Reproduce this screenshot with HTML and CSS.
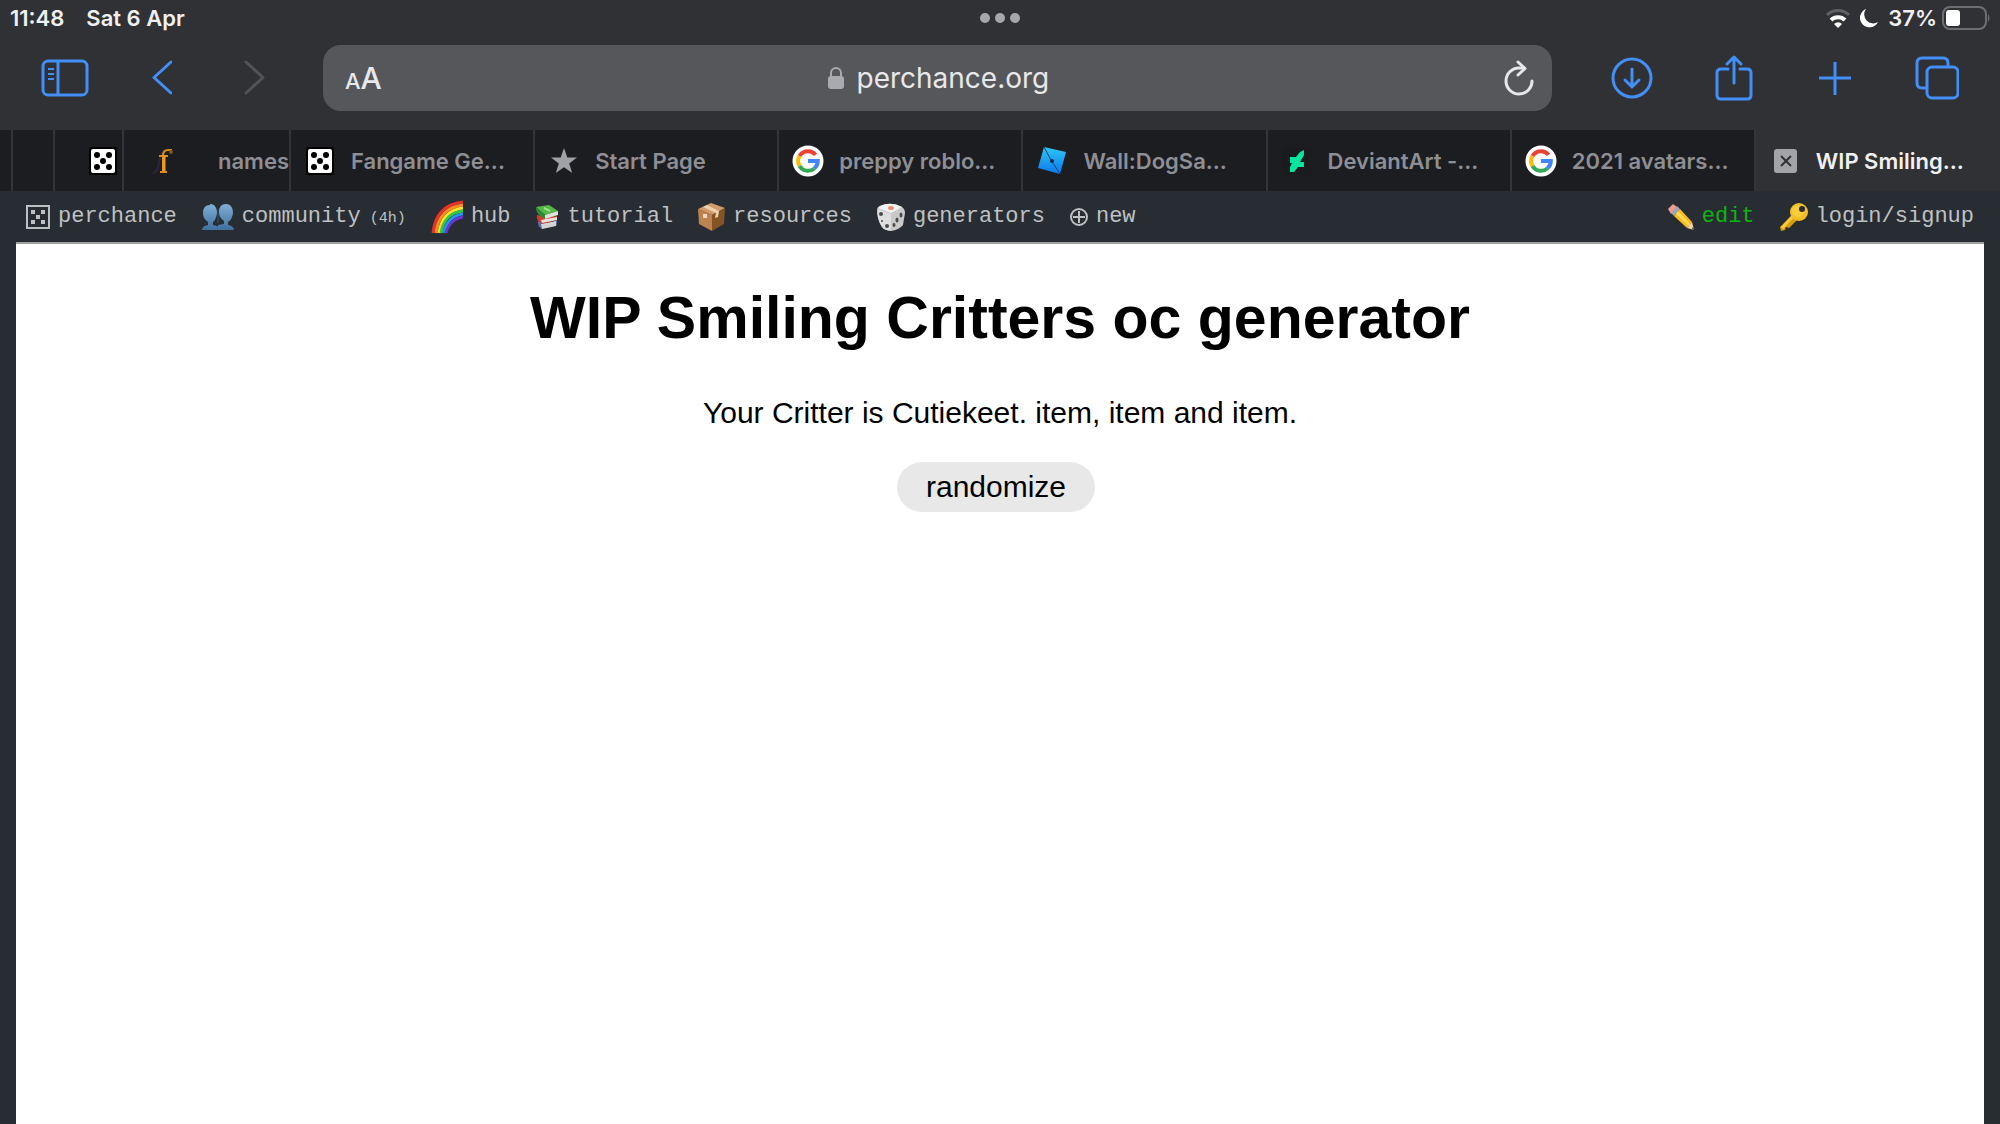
FILE: index.html
```html
<!DOCTYPE html>
<html lang="en">
<head>
    <meta charset="UTF-8">
    <meta name="viewport" content="width=device-width, initial-scale=1.0">
    <title>WIP Smiling Critters oc generator</title>
    <link rel="stylesheet" href="styles.css">
</head>
<body>
    <!-- shared symbols -->
    <svg class="symbols" aria-hidden="true">
        <symbol id="dice" viewBox="0 0 28 28">
            <rect width="28" height="28" rx="2" fill="#000"/>
            <rect x="2" y="2" width="24" height="24" rx="2" fill="#fff"/>
            <g fill="#000">
                <circle cx="8" cy="8" r="3"/><circle cx="20" cy="8" r="3"/>
                <circle cx="14" cy="14" r="3"/>
                <circle cx="8" cy="20" r="3"/><circle cx="20" cy="20" r="3"/>
            </g>
        </symbol>
        <symbol id="google" viewBox="0 0 32 32">
            <circle cx="16" cy="16" r="15.500" fill="#fff"/>
            <g fill="none" stroke-width="4">
                <path d="M23.600 9.800A9.800 9.800 0 0 0 7.500 11.100" stroke="#ea4335"/>
                <path d="M7.500 11.100a9.800 9.800 0 0 0 0 9.800" stroke="#fbbc05"/>
                <path d="M7.500 20.900a9.800 9.800 0 0 0 14.800 2.600" stroke="#34a853"/>
                <path d="M22.300 23.500A9.800 9.800 0 0 0 25.800 16H16" stroke="#4285f4"/>
            </g>
        </symbol>
    </svg>

    <header class="browser">
        <div class="status">
            <div class="status-left"><span>11:48</span><span>Sat 6 Apr</span></div>
            <svg class="dots" width="40" height="10" viewBox="0 0 40 10" fill="#a6a7aa">
                <circle cx="5" cy="5" r="5"/><circle cx="20" cy="5" r="5"/><circle cx="35" cy="5" r="5"/>
            </svg>
            <div class="status-right">
                <svg width="24" height="20" viewBox="0 0 24 20" fill="none" stroke-width="3">
                    <path d="M1 7a15.500 15.500 0 0 1 22 0" stroke="#606165"/>
                    <path d="M5 12a10 10 0 0 1 14 0" stroke="#fff" stroke-width="4"/>
                    <path d="M12 20l-4-4a5.600 5.600 0 0 1 8 0z" fill="#fff" stroke="none"/>
                </svg>
                <svg width="18" height="20" viewBox="0 0 18 20">
                    <path d="M6 1A9.500 9.500 0 1 0 18 14A9 9 0 0 1 6 1z" fill="#fff"/>
                </svg>
                <span class="battery">
                    37%
                    <svg width="48" height="24" viewBox="0 0 48 24">
                        <rect x="1" y="1" width="43" height="22" rx="7" fill="none" stroke="#6e6f73" stroke-width="2"/>
                        <rect x="4" y="4" width="14" height="16" rx="3" fill="#fff"/>
                        <path d="M46 8q3 4 0 8z" fill="#6e6f73"/>
                    </svg>
                </span>
            </div>
        </div>

        <div class="toolbar">
            <div class="tools tools-left">
                <button type="button" aria-label="Sidebar">
                    <svg width="48" height="38" viewBox="0 0 48 38" fill="none" stroke="#438ff8" stroke-width="3">
                        <rect x="2" y="2" width="44" height="34" rx="5"/>
                        <path d="M17 2v34"/>
                        <path d="M7 10h6M7 15h6M7 20h6" stroke-width="2"/>
                    </svg>
                </button>
                <button type="button" aria-label="Back">
                    <svg width="24" height="38" viewBox="0 0 24 38" fill="none" stroke="#438ff8" stroke-width="3" stroke-linecap="round" stroke-linejoin="round">
                        <path d="M23 3L6 18.500L23 34"/>
                    </svg>
                </button>
                <button type="button" aria-label="Forward" disabled>
                    <svg width="24" height="38" viewBox="0 0 24 38" fill="none" stroke="#525356" stroke-width="3" stroke-linecap="round" stroke-linejoin="round">
                        <path d="M3 3L20 18.500L3 34"/>
                    </svg>
                </button>
            </div>

            <div class="address">
                <button type="button" class="text-size" aria-label="Page settings"><small>A</small>A</button>
                <div class="url">
                    <svg width="18" height="24" viewBox="0 0 18 24">
                        <rect x="1" y="10" width="16" height="13" rx="3" fill="#a9aaaf"/>
                        <path d="M4 11V7a5 5 0 0 1 10 0v4" fill="none" stroke="#a9aaaf" stroke-width="2"/>
                    </svg>
                    <input type="text" value="perchance.org" aria-label="Address">
                </div>
                <button type="button" class="reload" aria-label="Reload">
                    <svg width="30" height="36" viewBox="0 0 30 36" fill="none" stroke="#e8e8ea" stroke-width="3" stroke-linecap="round" stroke-linejoin="round">
                        <path d="M28 21a13 13 0 1 1-13-13h5"/>
                        <path d="M14 2l7 6.500l-7 6.500"/>
                    </svg>
                </button>
            </div>

            <div class="tools tools-right">
                <button type="button" aria-label="Downloads">
                    <svg width="44" height="48" viewBox="0 0 44 48" fill="none" stroke="#438ff8" stroke-width="3" stroke-linecap="round" stroke-linejoin="round">
                        <circle cx="23" cy="24" r="19"/>
                        <path d="M23 15v18M16 26l7 7l7-7"/>
                    </svg>
                </button>
                <button type="button" aria-label="Share">
                    <svg width="44" height="48" viewBox="0 0 44 48" fill="none" stroke="#438ff8" stroke-width="3" stroke-linecap="round" stroke-linejoin="round">
                        <path d="M17 15h-7q-4 0-4 4v22q0 4 4 4h26q4 0 4-4v-22q0-4-4-4h-7"/>
                        <path d="M23 29V3M16 10l7-7l7 7"/>
                    </svg>
                </button>
                <button type="button" aria-label="New tab">
                    <svg width="44" height="48" viewBox="0 0 44 48" fill="none" stroke="#438ff8" stroke-width="3">
                        <path d="M22 8v33M6 24h32"/>
                    </svg>
                </button>
                <button type="button" aria-label="Tab overview">
                    <svg width="44" height="48" viewBox="0 0 44 48" fill="none" stroke="#438ff8" stroke-width="3">
                        <path d="M12 34H7q-5 0-5-5V9q0-5 5-5h21q5 0 5 5v4"/>
                        <rect x="12" y="13" width="31" height="31" rx="5"/>
                    </svg>
                </button>
            </div>
        </div>

        <nav class="tabs" aria-label="Tabs">
            <a class="tab tab-end" href="#" aria-label="Tab"></a>
            <a class="tab tab-end" href="#" aria-label="Tab"></a>
            <a class="tab tab-end" href="#" aria-label="Tab"><svg width="28" height="28"><use href="#dice"/></svg></a>
            <a class="tab tab-names" href="#">
                <svg width="28" height="28" viewBox="0 0 28 28" fill="none">
                    <path d="M3 26Q8 25 9 16Q10 8 14 3" stroke="#25284a" stroke-width="2"/>
                    <path d="M13 25V9q0-6 5-6h4M9 9h9M10 25h7" stroke="#d98a1c" stroke-width="2"/>
                    <path d="M14 24V8" stroke="#f39a1e" stroke-width="3"/>
                    <circle cx="21" cy="5" r="2" fill="#80501c"/>
                </svg>
                <span>names</span>
            </a>
            <a class="tab" href="#"><svg width="32" height="28"><use href="#dice"/></svg><span>Fangame Ge...</span></a>
            <a class="tab" href="#">
                <svg width="32" height="28" viewBox="0 0 32 28"><path d="M16 1l3.300 9.400h9.700l-7.800 6l3 9.600l-8.200-5.800l-8.200 5.800l3-9.600l-7.800-6h9.700z" fill="#a0a1a6"/></svg>
                <span>Start Page</span>
            </a>
            <a class="tab" href="#"><svg width="32" height="32"><use href="#google"/></svg><span>preppy roblo...</span></a>
            <a class="tab" href="#">
                <svg width="32" height="32" viewBox="0 0 32 32">
                    <defs>
                        <linearGradient id="wall" x1="0" y1="0" x2="0" y2="1"><stop offset="0" stop-color="#2fc6f7"/><stop offset="1" stop-color="#0a78ec"/></linearGradient>
                    </defs>
                    <path d="M8 2l22 5l-6 22l-22-6z" fill="url(#wall)"/>
                    <path d="M8 2L15 15L24 29" stroke="#14456f" fill="none"/>
                    <circle cx="16" cy="16" r="2" fill="#102a47"/>
                </svg>
                <span>Wall:DogSa...</span>
            </a>
            <a class="tab" href="#">
                <svg width="32" height="28" viewBox="0 0 32 28">
                    <rect x="2" width="28" height="28" fill="#191b1f"/>
                    <path d="M23 3v5l-4 7h4v5h-6l-4 5h-4v-5l2-4h-2v-6h6l4-5z" fill="#05e59b"/>
                </svg>
                <span>DeviantArt -...</span>
            </a>
            <a class="tab" href="#"><svg width="32" height="32"><use href="#google"/></svg><span>2021 avatars...</span></a>
            <a class="tab active" href="#" aria-current="page">
                <svg width="32" height="24" viewBox="0 0 32 24">
                    <rect x="5" width="23" height="24" rx="3" fill="#a3a4a7"/>
                    <path d="M12 7l10 10M22 7l-10 10" stroke="#303134" stroke-width="2"/>
                </svg>
                <span>WIP Smiling...</span>
            </a>
        </nav>
    </header>

    <nav class="menu" aria-label="Perchance">
        <a href="#">
            <svg width="24" height="24" viewBox="0 0 24 24">
                <rect x="1" y="1" width="22" height="22" fill="none" stroke="#bfc0c2" stroke-width="2"/>
                <g fill="#bfc0c2">
                    <rect x="5" y="5" width="4" height="4"/><rect x="15" y="5" width="4" height="4"/>
                    <rect x="10" y="10" width="4" height="4"/>
                    <rect x="5" y="15" width="4" height="4"/><rect x="15" y="15" width="4" height="4"/>
                </g>
            </svg>
            <span>perchance</span>
        </a>
        <a href="#">
            <svg width="32" height="28" viewBox="0 0 32 28">
                <defs>
                    <linearGradient id="people" x1="0" y1="0" x2="0" y2="1"><stop offset="0" stop-color="#7fb0d6"/><stop offset="1" stop-color="#3f6f9d"/></linearGradient>
                </defs>
                <path d="M24 1c5 0 7 4 7 9q-1 7-5 9v3q6 1 6 5H16v-5l6-1v-3q-5-3-5-9q0-8 7-8z" fill="url(#people)"/>
                <path d="M8 1c5 0 7 4 7 9q-1 7-4 9v3q7 1 7 5H0q0-4 6-5v-3q-5-3-5-9q0-8 7-8z" fill="url(#people)"/>
                <path d="M16 7v13" stroke="#31577b"/>
            </svg>
            <span>community <small>(4h)</small></span>
        </a>
        <a href="#">
            <svg width="32" height="34" viewBox="0 0 32 34" fill="none" stroke-width="3">
                <path d="M2 33C4 14 14 4 32 2" stroke="#e8322b"/>
                <path d="M5 33C7 16 16 7 32 5" stroke="#fb8c1e"/>
                <path d="M8 33C10 18 18 10 32 8" stroke="#fde22c"/>
                <path d="M10 33C12 20 20 12 32 11" stroke="#35c648"/>
                <path d="M13 33C15 22 22 15 32 14" stroke="#2498ec"/>
                <path d="M15 33C17 24 24 18 32 17" stroke="#6a35cf"/>
            </svg>
            <span>hub</span>
        </a>
        <a href="#">
            <svg width="24" height="26" viewBox="0 0 24 26">
                <path d="M3 17l12 3l7-4v5l-15 4q-5-3-4-8z" fill="#5570a0"/>
                <path d="M6 20l15-3v5l-14 3z" fill="#d5d3d2"/>
                <path d="M2 11l10 2l10-1v4l-15 4q-6-3-5-9z" fill="#d43b2c"/>
                <path d="M6 16l16-3v3l-15 3z" fill="#e5e2df"/>
                <path d="M1 3l13-2l9 6l-13 4z" fill="#55b945"/>
                <path d="M1 3l9 8v4q-10-5-9-12z" fill="#2f8a34"/>
                <path d="M10 11l13-4v4l-13 4z" fill="#dde5d8"/>
                <path d="M9 4l6 3" stroke="#9be08b" stroke-width="2"/>
            </svg>
            <span>tutorial</span>
        </a>
        <a href="#">
            <svg width="27" height="28" viewBox="0 0 27 28">
                <path d="M0 6L13 0l14 5l-13 7z" fill="#d19c69"/>
                <path d="M0 6l14 6v16L1 21z" fill="#bd8350"/>
                <path d="M14 12l13-7l-1 16l-12 7z" fill="#845425"/>
                <path d="M5 4l4-2l12 6l-1 6l-3 1l1-5z" fill="#edd0b0"/>
                <rect x="5" y="11" width="4" height="4" fill="#efd7bf"/>
            </svg>
            <span>resources</span>
        </a>
        <a href="#">
            <svg width="28" height="28" viewBox="0 0 28 28">
                <path d="M3 3q11-5 22 1q3 2 3 6l-2 12q-4 5-12 6q-5 0-9-4q-5-9-5-17q0-3 3-4z" fill="#c9c9c9"/>
                <path d="M3 3q11-5 22 1l-11 6l-13-5z" fill="#f2f2f2"/>
                <path d="M1 6l13 5v16q-6 1-9-3q-6-9-4-18z" fill="#dedede"/>
                <ellipse cx="14" cy="5" rx="3" ry="2" fill="#ef8a7c"/>
                <g fill="#4b4b4b">
                    <circle cx="4" cy="11" r="2"/><circle cx="5" cy="18" r="1"/><circle cx="10" cy="23" r="2"/>
                    <ellipse cx="24" cy="12" rx="1.500" ry="2.500"/><ellipse cx="20" cy="17" rx="1.500" ry="2.500"/><ellipse cx="17" cy="22" rx="1.500" ry="2"/>
                </g>
            </svg>
            <span>generators</span>
        </a>
        <a href="#">
            <svg width="18" height="18" viewBox="0 0 18 18" fill="none" stroke="#bfc0c2" stroke-width="2">
                <circle cx="9" cy="9" r="8"/><path d="M9 3v12M3 9h12"/>
            </svg>
            <span>new</span>
        </a>
        <a class="edit" href="#">
            <svg width="27" height="28" viewBox="0 0 27 28">
                <path d="M1 6l5-5l4 3l-6 7z" fill="#f09a93"/>
                <path d="M4 10l6-7l3 3l-6 7z" fill="#9fa6ad"/>
                <path d="M7 13l6-7l12 13l-5 6z" fill="#f7bc22"/>
                <path d="M9 11l2-3l12 13l-1 2z" fill="#ffda50"/>
                <path d="M20 25l5-6l2 8z" fill="#f1d3a6"/>
                <path d="M25 26l1-2l1 3z" fill="#333"/>
            </svg>
            <span>edit</span>
        </a>
        <a href="#">
            <svg width="28" height="28" viewBox="0 0 28 28">
                <path d="M13 11l5 5l-9 9l-3-1l-1 3l-4 1l-1-4z" fill="#d99c12"/>
                <path d="M14 12L2 25" stroke="#f8cc3a" stroke-width="3"/>
                <circle cx="19" cy="9" r="9" fill="#f3bd25"/>
                <circle cx="18" cy="8" r="6" fill="#f8cc3a"/>
                <circle cx="22" cy="6" r="3" fill="#282d33"/>
            </svg>
            <span>login/signup</span>
        </a>
    </nav>

    <main class="page">
        <h1>WIP Smiling Critters oc generator</h1>
        <p>Your Critter is Cutiekeet. item, item and item.</p>
        <button type="button" class="randomize">randomize</button>
    </main>
</body>
</html>
```

FILE: styles.css
```css
* {
    margin: 0;
    padding: 0;
    box-sizing: border-box;
}

body {
    min-height: 100vh;
    display: flex;
    flex-direction: column;
    background-color: #282d33;
    font-family: "Liberation Sans", sans-serif;
}

a {
    color: inherit;
    text-decoration: none;
}

button {
    border: none;
    background: none;
    color: inherit;
    font: inherit;
}

svg {
    display: block;
    flex: none;
}

.symbols {
    position: absolute;
    width: 0;
    height: 0;
}

/* browser chrome */
.browser {
    background-color: #303134;
    font-family: Inter, sans-serif;
}

.status {
    display: grid;
    grid-template-columns: 1fr auto 1fr;
    align-items: center;
    height: 36px;
    padding: 0 10px;
    color: #f0f0f2;
    font-size: 22px;
    font-weight: 600;
}

.status-left {
    display: flex;
    gap: 22px;
}

.status-right {
    display: flex;
    justify-content: flex-end;
    align-items: center;
    gap: 10px;
}

.battery {
    display: flex;
    align-items: center;
    gap: 5px;
}

.toolbar {
    display: flex;
    align-items: center;
    padding: 9px 41px 19px;
}

.tools {
    display: flex;
    align-items: center;
}

.tools button {
    display: flex;
    justify-content: center;
}

.tools-left {
    gap: 47px;
}

.tools-left button {
    width: 48px;
}

.tools-right {
    gap: 58px;
}

.address {
    flex: 1;
    display: grid;
    grid-template-columns: 1fr auto 1fr;
    align-items: center;
    height: 66px;
    margin: 0 57px 0 44px;
    padding: 0 18px 0 22px;
    border-radius: 18px;
    background-color: #56575a;
    color: #e8e8ea;
    font-size: 28px;
}

.text-size {
    justify-self: start;
    font-size: 30px;
    font-weight: 500;
}

.text-size small {
    font-size: 22px;
}

.url {
    display: flex;
    align-items: center;
    gap: 12px;
}

.url input {
    width: 196px;
    border: none;
    outline: none;
    background: none;
    color: inherit;
    font: inherit;
}

.reload {
    justify-self: end;
}

.tabs {
    display: grid;
    grid-template-columns: 13px 42px 69px 167px repeat(7, 1fr);
    height: 61px;
    background-color: #1c1d21;
    color: #8e8f95;
    font-size: 22px;
    font-weight: 600;
}

.tab {
    display: flex;
    align-items: center;
    gap: 15px;
    min-width: 0;
    padding-left: 13px;
    border-right: 2px solid #33353a;
    white-space: nowrap;
    overflow: hidden;
}

.tab-end {
    justify-content: flex-end;
    padding: 0 5px 0 0;
}

.tab-names {
    justify-content: space-between;
    padding-left: 26px;
}

.tab.active {
    border-right: none;
    background-color: #303134;
    color: #f0f0f2;
}

/* perchance menu */
.menu {
    display: flex;
    align-items: center;
    gap: 25px;
    height: 51px;
    padding: 0 26px;
    color: #bfc0c2;
    font-family: "Liberation Mono", monospace;
    font-size: 22px;
}

.menu a {
    display: flex;
    align-items: center;
    gap: 8px;
    white-space: nowrap;
}

.menu small {
    margin-left: -4px;
    font-size: 15px;
}

.menu .edit {
    margin-left: auto;
    color: #0bb50f;
}

/* generator page */
.page {
    flex: 1;
    margin: 0 16px;
    padding: 39px 16px;
    border-top: 2px solid #a0a2a4;
    background-color: #fff;
    color: #000;
    text-align: center;
}

.page h1 {
    font-size: 59px;
    line-height: 70px;
}

.page p {
    margin: 43px 0 32px;
    font-size: 30px;
    line-height: 34px;
}

.randomize {
    height: 50px;
    margin-right: 8px;
    padding: 0 29px;
    border-radius: 25px;
    background-color: #e8e8e8;
    font-size: 30px;
}
```
